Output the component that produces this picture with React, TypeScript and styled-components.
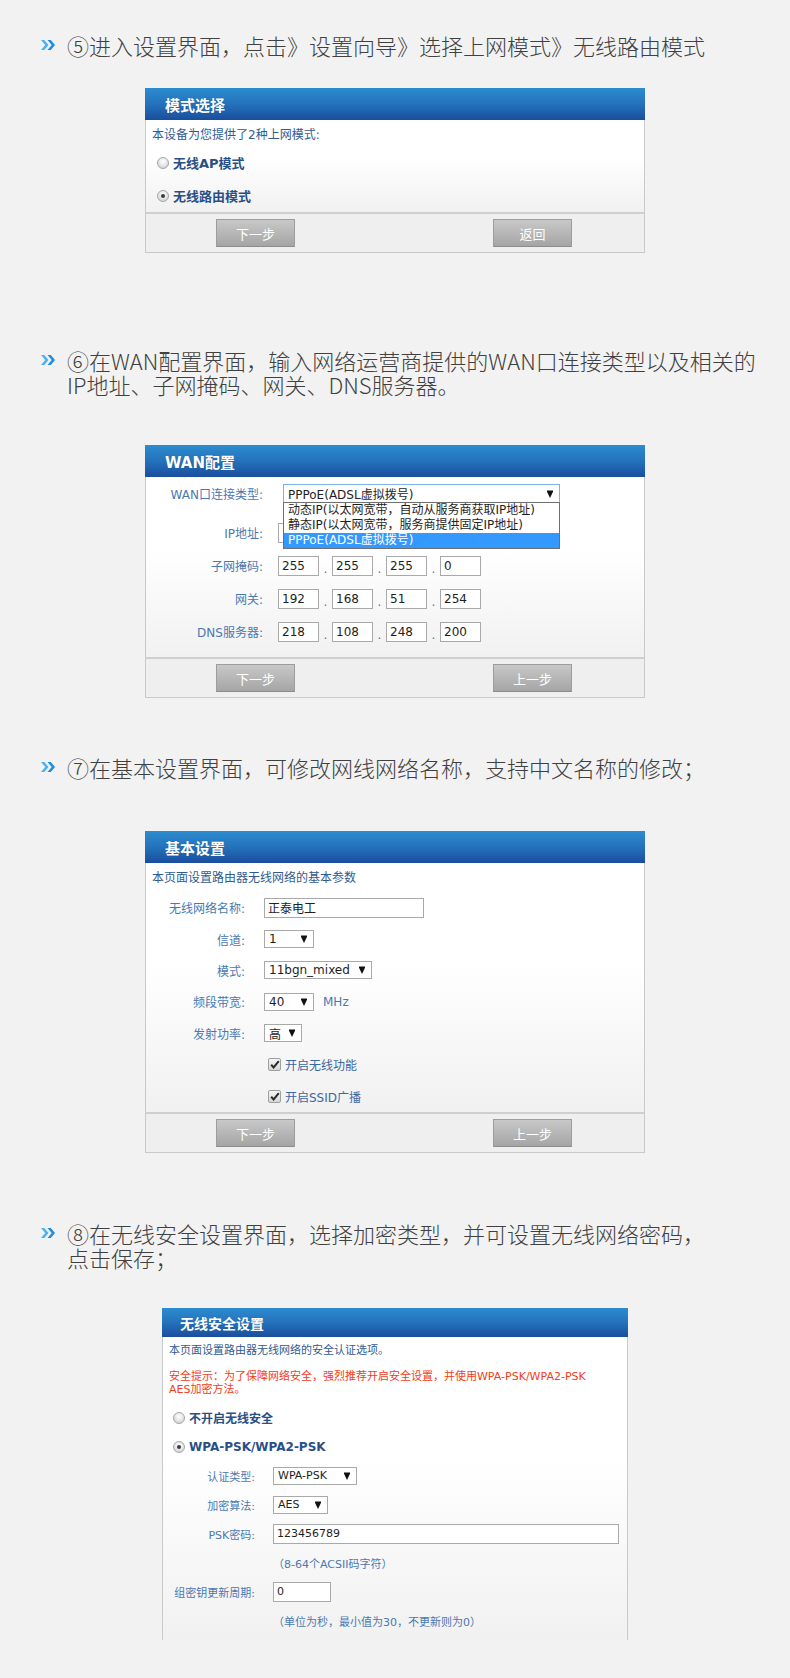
import React from 'react';
import styled, { createGlobalStyle } from 'styled-components';

const UI_FONT = `"DejaVu Sans", "Noto Sans CJK SC", sans-serif`;

const GlobalStyle = createGlobalStyle`
  html, body {
    margin: 0;
    padding: 0;
    background: #f2f2f2;
  }
  #root {
    min-height: 1678px;
  }
`;

const Page = styled.main`
  width: 790px;
  overflow: hidden;
`;

const Step = styled.section<{ $top: number }>`
  padding-top: ${({ $top }) => $top}px;
`;

const Title = styled.h2`
  display: flex;
  align-items: flex-start;
  margin: 0;
  padding-left: 41px;
  font: 300 22px/24px "Noto Sans CJK SC", sans-serif;
  color: #404040;
  white-space: nowrap;
`;

const Mark = styled.span`
  display: flex;
  align-items: center;
  flex: none;
  width: 26px;
  height: 24px;
`;

const Panel = styled.div<{ $w: number; $gap: number }>`
  width: ${({ $w }) => $w}px;
  margin: ${({ $gap }) => $gap}px auto 0;
  font-family: ${UI_FONT};
`;

const Header = styled.div<{ $small?: boolean }>`
  display: flex;
  align-items: center;
  height: ${({ $small }) => ($small ? 29 : 32)}px;
  padding-left: ${({ $small }) => ($small ? 18 : 20)}px;
  background: linear-gradient(to bottom, #2c8cd0 0%, #2472bb 50%, #1a4d9d 100%);
  color: #fff;
  font: bold ${({ $small }) => ($small ? 14 : 15)}px ${UI_FONT};
  text-shadow: 0 0 1px rgba(0, 0, 0, 0.25);
`;

const Body = styled.div<{ $h: number; $pt: number; $cut?: boolean }>`
  box-sizing: border-box;
  height: ${({ $h }) => $h}px;
  padding: ${({ $pt }) => $pt}px 6px 0;
  background: linear-gradient(to bottom, #ffffff 0%, #ffffff 40%, #f1f1f1 100%);
  border-left: 1px solid #c9c9c9;
  border-right: 1px solid #c9c9c9;
  overflow: ${({ $cut }) => ($cut ? 'hidden' : 'visible')};
`;

const Intro = styled.p<{ $mb: number; $small?: boolean }>`
  margin: 0 0 ${({ $mb }) => $mb}px;
  font-size: ${({ $small }) => ($small ? 11 : 12)}px;
  line-height: ${({ $small }) => ($small ? 14 : 16)}px;
  color: #305b91;
  white-space: nowrap;
`;

const Warning = styled.p`
  margin: 12px 0 7px;
  font-size: 11px;
  line-height: 13px;
  color: #f23c1a;
  white-space: nowrap;
`;

const Choice = styled.label<{ $h: number; $size: number; $indent: number }>`
  display: flex;
  align-items: center;
  gap: 4px;
  height: ${({ $h }) => $h}px;
  padding-left: ${({ $indent }) => $indent}px;
  font-size: ${({ $size }) => $size}px;
  font-weight: bold;
  color: #2a4f86;
`;

const Radio = styled.span<{ $on?: boolean }>`
  position: relative;
  box-sizing: border-box;
  flex: none;
  width: 12px;
  height: 12px;
  border-radius: 50%;
  border: 1px solid #a6a6a6;
  background: radial-gradient(circle at 50% 35%, #ffffff 0%, #e6e6e6 50%, #c6c6c6 100%);

  &::after {
    content: '';
    display: ${({ $on }) => ($on ? 'block' : 'none')};
    position: absolute;
    left: 3px;
    top: 3px;
    width: 4px;
    height: 4px;
    border-radius: 50%;
    background: #3b3b3b;
  }
`;

const FieldRow = styled.div<{ $h: number; $mb: number }>`
  display: flex;
  align-items: center;
  height: ${({ $h }) => $h}px;
  margin-bottom: ${({ $mb }) => $mb}px;
`;

const FieldLabel = styled.span<{ $w: number; $gap: number; $size: number }>`
  flex: none;
  width: ${({ $w }) => $w}px;
  margin-right: ${({ $gap }) => $gap}px;
  text-align: right;
  font-size: ${({ $size }) => $size}px;
  color: #4a79b1;
  white-space: nowrap;
`;

const TextBox = styled.input<{ $w: number; $size?: number }>`
  box-sizing: border-box;
  width: ${({ $w }) => $w}px;
  height: 20px;
  margin: 0;
  padding: 0 3px;
  border: 1px solid #a9a9a9;
  background: #fff;
  font: ${({ $size }) => $size ?? 12}px ${UI_FONT};
  color: #1e1e1e;
  outline: none;
`;

const Dot = styled.span`
  width: 13px;
  text-align: center;
  font-size: 12px;
  color: #4a79b1;
  padding-top: 6px;
`;

const SelectBox = styled.div<{ $w: number; $h?: number; $focus?: boolean; $size?: number }>`
  position: relative;
  box-sizing: border-box;
  display: flex;
  align-items: center;
  justify-content: space-between;
  width: ${({ $w }) => $w}px;
  height: ${({ $h }) => $h ?? 18}px;
  padding: 0 6px 0 4px;
  border: 1px solid ${({ $focus }) => ($focus ? '#7db2e8' : '#a9a9a9')};
  background: #fff;
  font-size: ${({ $size }) => $size ?? 12}px;
  color: #1e1e1e;
  white-space: nowrap;
`;

const DropList = styled.ul`
  position: absolute;
  top: 100%;
  left: -1px;
  right: -1px;
  z-index: 2;
  margin: 0;
  padding: 0;
  list-style: none;
  border: 1px solid #6f6f6f;
  background: #fff;
`;

const DropItem = styled.li<{ $active?: boolean }>`
  height: 15px;
  padding-left: 4px;
  font-size: 12px;
  line-height: 15px;
  color: ${({ $active }) => ($active ? '#fff' : '#1e1e1e')};
  background: ${({ $active }) => ($active ? '#3399ff' : 'transparent')};
`;

const Unit = styled.span`
  margin-left: 9px;
  font-size: 12px;
  color: #4a79b1;
`;

const Hint = styled.span`
  font-size: 11px;
  color: #4a79b1;
  white-space: nowrap;
`;

const CheckItem = styled.label`
  display: flex;
  align-items: center;
  gap: 4px;
  margin-left: 4px;
  font-size: 12px;
  color: #3a68a3;
`;

const CheckBox = styled.span`
  box-sizing: border-box;
  display: flex;
  align-items: center;
  justify-content: center;
  width: 13px;
  height: 13px;
  border: 1px solid #9f9f9f;
  border-radius: 2px;
  background: linear-gradient(to bottom, #f6f6f6, #d6d6d6);
`;

const Footer = styled.div`
  display: flex;
  justify-content: space-between;
  padding: 5px 72px 5px 70px;
  background: #efefef;
  border: 1px solid #c9c9c9;
  border-top: 2px solid #cfcfcf;
`;

const Button = styled.button`
  width: 79px;
  height: 28px;
  padding: 0;
  border: 1px solid #9d9d9d;
  border-bottom-color: #8c8c8c;
  background: linear-gradient(to bottom, #c8c8c8, #a5a5a5);
  color: #fff;
  font: 13px "Noto Sans CJK SC", sans-serif;
`;

const Chevrons = () => (
  <svg width="15" height="10" viewBox="0 0 15 10">
    <path d="M0 0h3.3l4.2 5-4.2 5H0l4.2-5z" fill="#4db2f2" />
    <path d="M6.5 0h3.3L14 5l-4.2 5H6.5l4.2-5z" fill="#1f8de3" />
  </svg>
);

const Arrow = () => (
  <svg width="6" height="8" viewBox="0 0 6 8">
    <path d="M0 0.5h6v1.2L3 8 0 1.7z" fill="#111" />
  </svg>
);

const Tick = () => (
  <svg width="10" height="9" viewBox="0 0 10 9">
    <path d="M1.2 4.8l2.4 2.6L8.8 1.2" fill="none" stroke="#2a2a2a" strokeWidth="2" />
  </svg>
);

type FieldProps = {
  label?: string;
  w: number;
  gap: number;
  h: number;
  size?: number;
  mb?: number;
  children?: React.ReactNode;
};

const Field = ({ label, w, gap, h, size = 12, mb = 0, children }: FieldProps) => (
  <FieldRow $h={h} $mb={mb}>
    <FieldLabel $w={w} $gap={gap} $size={size}>
      {label}
    </FieldLabel>
    {children}
  </FieldRow>
);

const Select = ({ w, value, size, h }: { w: number; value: string; size?: number; h?: number }) => (
  <SelectBox $w={w} $size={size} $h={h}>
    <span>{value}</span>
    <Arrow />
  </SelectBox>
);

const IpFields = ({ values }: { values: string[] }) => (
  <>
    {values.map((v, i) => (
      <React.Fragment key={i}>
        {i > 0 && <Dot>.</Dot>}
        <TextBox $w={41} defaultValue={v} readOnly />
      </React.Fragment>
    ))}
  </>
);

const StepTitle = ({ children }: { children: React.ReactNode }) => (
  <Title>
    <Mark>
      <Chevrons />
    </Mark>
    <span>{children}</span>
  </Title>
);

const ModePanel = () => (
  <Panel $w={500} $gap={31}>
    <Header>模式选择</Header>
    <Body $h={92} $pt={7}>
      <Intro $mb={3}>本设备为您提供了2种上网模式:</Intro>
      <Choice $h={33} $size={13} $indent={5}>
        <Radio />
        无线AP模式
      </Choice>
      <Choice $h={33} $size={13} $indent={5}>
        <Radio $on />
        无线路由模式
      </Choice>
    </Body>
    <Footer>
      <Button>下一步</Button>
      <Button>返回</Button>
    </Footer>
  </Panel>
);

const wan = { w: 111, gap: 15, h: 33 };

const WanPanel = () => (
  <Panel $w={500} $gap={49}>
    <Header>WAN配置</Header>
    <Body $h={180} $pt={0}>
      <Field label="WAN口连接类型:" {...wan} mb={6}>
        <SelectBox $w={277} $h={19} $focus style={{ marginLeft: 5 }}>
          <span>PPPoE(ADSL虚拟拨号)</span>
          <Arrow />
          <DropList>
            <DropItem>动态IP(以太网宽带，自动从服务商获取IP地址)</DropItem>
            <DropItem>静态IP(以太网宽带，服务商提供固定IP地址)</DropItem>
            <DropItem $active>PPPoE(ADSL虚拟拨号)</DropItem>
          </DropList>
        </SelectBox>
      </Field>
      <Field label="IP地址:" {...wan}>
        <IpFields values={['192', '168', '1', '1']} />
      </Field>
      <Field label="子网掩码:" {...wan}>
        <IpFields values={['255', '255', '255', '0']} />
      </Field>
      <Field label="网关:" {...wan}>
        <IpFields values={['192', '168', '51', '254']} />
      </Field>
      <Field label="DNS服务器:" {...wan}>
        <IpFields values={['218', '108', '248', '200']} />
      </Field>
    </Body>
    <Footer>
      <Button>下一步</Button>
      <Button>上一步</Button>
    </Footer>
  </Panel>
);

const basic = { w: 93, gap: 19, h: 31.4 };

const BasicPanel = () => (
  <Panel $w={500} $gap={52}>
    <Header>基本设置</Header>
    <Body $h={249} $pt={7}>
      <Intro $mb={6}>本页面设置路由器无线网络的基本参数</Intro>
      <Field label="无线网络名称:" {...basic}>
        <TextBox $w={160} defaultValue="正泰电工" readOnly />
      </Field>
      <Field label="信道:" {...basic}>
        <Select w={50} value="1" />
      </Field>
      <Field label="模式:" {...basic}>
        <Select w={108} value="11bgn_mixed" />
      </Field>
      <Field label="频段带宽:" {...basic}>
        <Select w={50} value="40" />
        <Unit>MHz</Unit>
      </Field>
      <Field label="发射功率:" {...basic}>
        <Select w={38} value="高" />
      </Field>
      <Field {...basic}>
        <CheckItem>
          <CheckBox>
            <Tick />
          </CheckBox>
          开启无线功能
        </CheckItem>
      </Field>
      <Field {...basic}>
        <CheckItem>
          <CheckBox>
            <Tick />
          </CheckBox>
          开启SSID广播
        </CheckItem>
      </Field>
    </Body>
    <Footer>
      <Button>下一步</Button>
      <Button>上一步</Button>
    </Footer>
  </Panel>
);

const sec = { w: 86, gap: 18, h: 29, size: 11 };

const SecurityPanel = () => (
  <Panel $w={466} $gap={39}>
    <Header $small>无线安全设置</Header>
    <Body $h={303} $pt={7} $cut>
      <Intro $mb={0} $small>
        本页面设置路由器无线网络的安全认证选项。
      </Intro>
      <Warning>
        安全提示：为了保障网络安全，强烈推荐开启安全设置，并使用WPA-PSK/WPA2-PSK
        <br />
        AES加密方法。
      </Warning>
      <Choice $h={29} $size={12} $indent={4}>
        <Radio />
        不开启无线安全
      </Choice>
      <Choice $h={29} $size={12} $indent={4}>
        <Radio $on />
        WPA-PSK/WPA2-PSK
      </Choice>
      <Field label="认证类型:" {...sec}>
        <Select w={84} h={18} value="WPA-PSK" size={11} />
      </Field>
      <Field label="加密算法:" {...sec}>
        <Select w={55} h={18} value="AES" size={11} />
      </Field>
      <Field label="PSK密码:" {...sec}>
        <TextBox $w={346} $size={11} defaultValue="123456789" readOnly />
      </Field>
      <Field {...sec}>
        <Hint>（8-64个ACSII码字符）</Hint>
      </Field>
      <Field label="组密钥更新周期:" {...sec}>
        <TextBox $w={58} $size={11} defaultValue="0" readOnly />
      </Field>
      <Field {...sec}>
        <Hint>（单位为秒，最小值为30，不更新则为0）</Hint>
      </Field>
      <Choice $h={29} $size={12} $indent={4}>
        <Radio />
      </Choice>
    </Body>
  </Panel>
);

export default function App() {
  return (
    <>
      <GlobalStyle />
      <Page>
        <Step $top={33}>
          <StepTitle>⑤进入设置界面，点击》设置向导》选择上网模式》无线路由模式</StepTitle>
          <ModePanel />
        </Step>
        <Step $top={95}>
          <StepTitle>
            ⑥在WAN配置界面，输入网络运营商提供的WAN口连接类型以及相关的
            <br />
            IP地址、子网掩码、网关、DNS服务器。
          </StepTitle>
          <WanPanel />
        </Step>
        <Step $top={57}>
          <StepTitle>⑦在基本设置界面，可修改网线网络名称，支持中文名称的修改；</StepTitle>
          <BasicPanel />
        </Step>
        <Step $top={68}>
          <StepTitle>
            ⑧在无线安全设置界面，选择加密类型，并可设置无线网络密码，
            <br />
            点击保存；
          </StepTitle>
          <SecurityPanel />
        </Step>
      </Page>
    </>
  );
}
